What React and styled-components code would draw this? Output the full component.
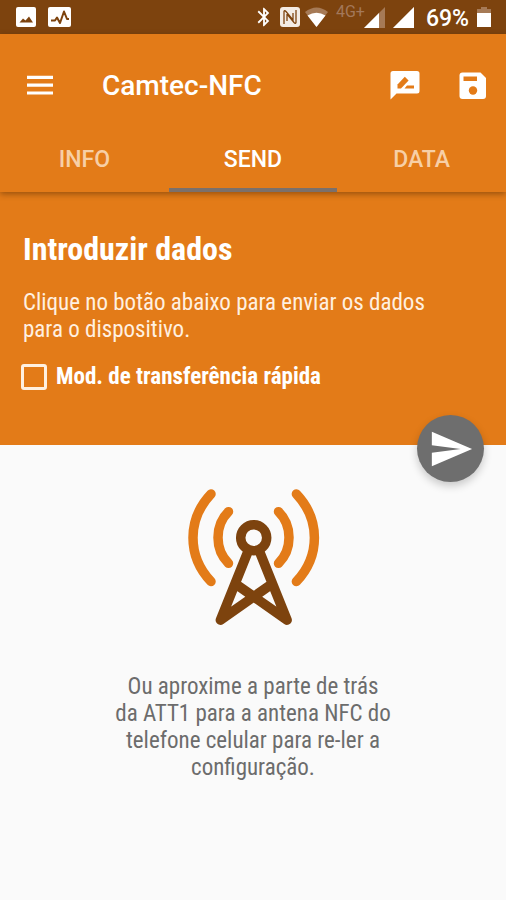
import React, { Fragment, useState } from "react";
import styled, { createGlobalStyle } from "styled-components";
import { MdBluetooth, MdSend } from "react-icons/md";

const ORANGE = "#e37b18";
const BROWN = "#7d430e";
const GREY = "#6e6e6e";
const CONDENSED = `"Roboto Condensed", "Liberation Sans Narrow", Roboto, sans-serif`;

const GlobalStyle = createGlobalStyle`
  * {
    box-sizing: border-box;
  }
  body {
    margin: 0;
    background-color: #fafafa;
    font-family: Roboto, sans-serif;
  }
`;

const Screen = styled.div`
  min-height: 100vh;
  display: flex;
  flex-direction: column;
`;

const StatusBar = styled.div`
  height: 34px;
  padding: 0 15px 0 16px;
  display: flex;
  justify-content: space-between;
  align-items: center;
  background-color: ${BROWN};
  color: white;
`;

const StatusGroup = styled.div`
  display: flex;
  align-items: center;
  gap: ${props => props.$gap}px;
`;

const Network = styled.span`
  align-self: flex-start;
  margin-right: -9px;
  font-size: 16px;
  line-height: 24px;
  color: #a3785a;
`;

const Battery = styled.span`
  margin-left: 4px;
  padding-top: 4px;
  font-size: 23px;
  font-weight: 500;
  line-height: 30px;
`;

const AppBar = styled.header`
  position: relative;
  z-index: 2;
  background-color: ${ORANGE};
  box-shadow: 0 2px 6px 0 rgba(60, 30, 0, 0.45);
`;

const Toolbar = styled.div`
  display: flex;
  align-items: center;
  height: 92px;
  padding: 12px 15px 0 22px;
`;

const Title = styled.h1`
  flex: 1;
  margin: 0 0 0 44px;
  color: white;
  font-size: 28px;
  font-weight: 500;
  line-height: 36px;
`;

const Actions = styled.div`
  display: flex;
  gap: 32px;
`;

const IconButton = styled.button`
  display: flex;
  padding: 0;
  border: 0;
  background: none;
  color: white;
  cursor: pointer;
`;

const Tabs = styled.nav`
  display: grid;
  grid-template-columns: repeat(3, 1fr);
`;

const Tab = styled.button`
  height: 66px;
  padding: 6px 0 0;
  border: 0;
  border-bottom: 4px solid ${props => (props.$active ? "#7b706b" : "transparent")};
  background: none;
  color: ${props => (props.$active ? "white" : "#f7cfa6")};
  font-family: inherit;
  font-size: 23px;
  font-weight: 500;
  line-height: 28px;
  cursor: pointer;
`;

const SendPanel = styled.section`
  position: relative;
  padding: 38px 22px 52px 23px;
  background-color: ${ORANGE};
  color: white;
  font-family: ${CONDENSED};
`;

const Heading = styled.h2`
  margin: 0 0 21px;
  font-size: 32px;
  font-weight: 700;
  line-height: 38px;
`;

const Description = styled.p`
  max-width: 420px;
  margin: 0 0 18px;
  color: #fff0e0;
  font-size: 23px;
  line-height: 27px;
`;

const Option = styled.label`
  display: flex;
  align-items: center;
  gap: 9px;
  font-size: 23px;
  font-weight: 700;
  line-height: 32px;
`;

const Checkbox = styled.input`
  appearance: none;
  width: 26px;
  height: 26px;
  margin: 0 0 0 -2px;
  border: 3px solid #fff0e0;
  border-radius: 3px;
  &:checked {
    background-color: ${GREY};
  }
`;

const SendButton = styled.button`
  position: absolute;
  right: 22px;
  bottom: -37px;
  z-index: 1;
  display: flex;
  align-items: center;
  justify-content: center;
  width: 67px;
  height: 67px;
  padding: 0;
  border: 0;
  border-radius: 50%;
  background-color: ${GREY};
  box-shadow: 0 4px 8px 0 rgba(0, 0, 0, 0.2);
  color: white;
  cursor: pointer;
`;

const Hint = styled.section`
  display: flex;
  flex-direction: column;
  align-items: center;
  gap: 48px;
  padding: 42px 24px;
`;

const HintText = styled.p`
  max-width: 276px;
  margin: 0;
  color: #6c6c6c;
  font-family: ${CONDENSED};
  font-size: 23px;
  line-height: 27px;
  text-align: center;
`;

const PictureIcon = () => (
  <svg width="20" height="20" viewBox="0 0 20 20">
    <rect width="20" height="20" rx="2" fill="white" />
    <path d="M3.500 15.500l3.500-4 2.500 2 3.500-4 4 6z" fill={BROWN} />
  </svg>
);

const PulseIcon = () => (
  <svg width="23" height="20" viewBox="0 0 23 20">
    <rect width="23" height="20" rx="2" fill="white" />
    <path
      d="M3 13.500h4l2-3 3 5.500 4-11.500 3 7.500h2"
      fill="none"
      stroke={BROWN}
      strokeWidth="2"
      strokeLinejoin="round"
    />
  </svg>
);

const NfcIcon = () => (
  <svg width="20" height="20" viewBox="0 0 20 20">
    <rect width="20" height="20" rx="3" fill="#f3ebe4" />
    <path
      d="M4 17V4.500Q4.500 3 6 4.500L13 13V6M16 3v12.500Q15.500 17 14 15.500L7 7v7"
      fill="none"
      stroke={BROWN}
      strokeWidth="1.300"
    />
  </svg>
);

const WifiIcon = () => (
  <svg width="23" height="20" viewBox="0 0 23 20">
    <path d="M0 5Q11.500-4 23 5L11.500 20z" fill="#a67a56" />
    <path d="M2.500 8.500Q11.500 3 20.500 8.500L11.500 20z" fill="white" />
  </svg>
);

const SignalIcon = ({ level }) => (
  <svg width="21" height="21" viewBox="0 0 21 21">
    <path d="M0 21L21 0V21z" fill="#a67a56" />
    <path d={`M0 21L${level} ${21 - level}V21z`} fill="white" />
  </svg>
);

const BatteryIcon = () => (
  <svg width="14" height="20" viewBox="0 0 14 20">
    <path d="M4 0h6v2h4v5H0V2h4z" fill="#a67a56" />
    <path d="M0 6h14v14H0z" fill="white" />
  </svg>
);

const MenuIcon = () => (
  <svg width="36" height="36" viewBox="0 0 36 36" fill="currentColor">
    <path d="M5 7.800h26v3.200H5zM5 15.600h26v3.200H5zM5 23.400h26v3.200H5z" />
  </svg>
);

const ReviewIcon = () => (
  <svg width="36" height="36" viewBox="0 0 36 36">
    <path
      d="M6 3h24q2.500 0 2.500 2.500v17.500q0 2.500-2.500 2.500H9.500L3.500 31.500V5.500Q3.500 3 6 3z"
      fill="currentColor"
    />
    <path d="M10.500 20.500v-4l7.300-7.700 3.800 3.600-7.600 8.100z" fill={ORANGE} />
    <path d="M20 17.500h7v3h-9.500z" fill={ORANGE} />
  </svg>
);

const SaveIcon = () => (
  <svg width="36" height="36" viewBox="0 0 36 36">
    <path
      d="M7.500 4.500h18l5.500 5.500v18q0 3-3 3H7.500q-3 0-3-3V7.500q0-3 3-3z"
      fill="currentColor"
    />
    <path d="M8.500 8.500h13.500v4.500H8.500z" fill={ORANGE} />
    <circle cx="18" cy="22.500" r="4.200" fill={ORANGE} />
  </svg>
);

// mast in the middle, two waves on each side
const AntennaIcon = () => (
  <svg width="134" height="138" viewBox="0 0 134 138" fill="none" strokeLinecap="round">
    <g stroke={ORANGE} strokeWidth="9.500">
      <path d="M25 7Q7 26 7 50.800T25 94.600" />
      <path d="M42.500 24.700Q32 35 32 50.500T42.500 76.300" />
      <path d="M110.400 7Q128.400 26 128.400 50.800T110.400 94.600" />
      <path d="M92.500 24.700Q103 35 103 50.500T92.500 76.300" />
    </g>
    <g stroke={BROWN} strokeLinejoin="round">
      <circle cx="67.700" cy="50.700" r="13" strokeWidth="9.500" />
      <path
        d="M62 64.500L34.500 133L83 99M73.500 64.500L101 133L52.500 99"
        strokeWidth="9.800"
      />
    </g>
  </svg>
);

const TABS = ["INFO", "SEND", "DATA"];

const App = () => {
  const [tab, setTab] = useState("SEND");
  const [fast, setFast] = useState(false);

  return (
    <Fragment>
      <GlobalStyle />
      <Screen>
        <StatusBar>
          <StatusGroup $gap={12}>
            <PictureIcon />
            <PulseIcon />
          </StatusGroup>
          <StatusGroup $gap={8}>
            <StatusGroup $gap={5}>
              <MdBluetooth size={22} />
              <NfcIcon />
              <WifiIcon />
            </StatusGroup>
            <Network>4G+</Network>
            <SignalIcon level={15} />
            <SignalIcon level={21} />
            <Battery>69%</Battery>
            <BatteryIcon />
          </StatusGroup>
        </StatusBar>
        <AppBar>
          <Toolbar>
            <IconButton aria-label="Menu">
              <MenuIcon />
            </IconButton>
            <Title>Camtec-NFC</Title>
            <Actions>
              <IconButton aria-label="Editar">
                <ReviewIcon />
              </IconButton>
              <IconButton aria-label="Salvar">
                <SaveIcon />
              </IconButton>
            </Actions>
          </Toolbar>
          <Tabs>
            {TABS.map(name => (
              <Tab key={name} $active={name === tab} onClick={() => setTab(name)}>
                {name}
              </Tab>
            ))}
          </Tabs>
        </AppBar>
        <SendPanel>
          <Heading>Introduzir dados</Heading>
          <Description>
            Clique no botão abaixo para enviar os dados para o dispositivo.
          </Description>
          <Option>
            <Checkbox
              type="checkbox"
              checked={fast}
              onChange={e => setFast(e.target.checked)}
            />
            Mod. de transferência rápida
          </Option>
          <SendButton aria-label="Enviar">
            <MdSend size={46} />
          </SendButton>
        </SendPanel>
        <Hint>
          <AntennaIcon />
          <HintText>
            Ou aproxime a parte de trás da ATT1 para a antena NFC do telefone
            celular para re-ler a configuração.
          </HintText>
        </Hint>
      </Screen>
    </Fragment>
  );
};

export default App;
